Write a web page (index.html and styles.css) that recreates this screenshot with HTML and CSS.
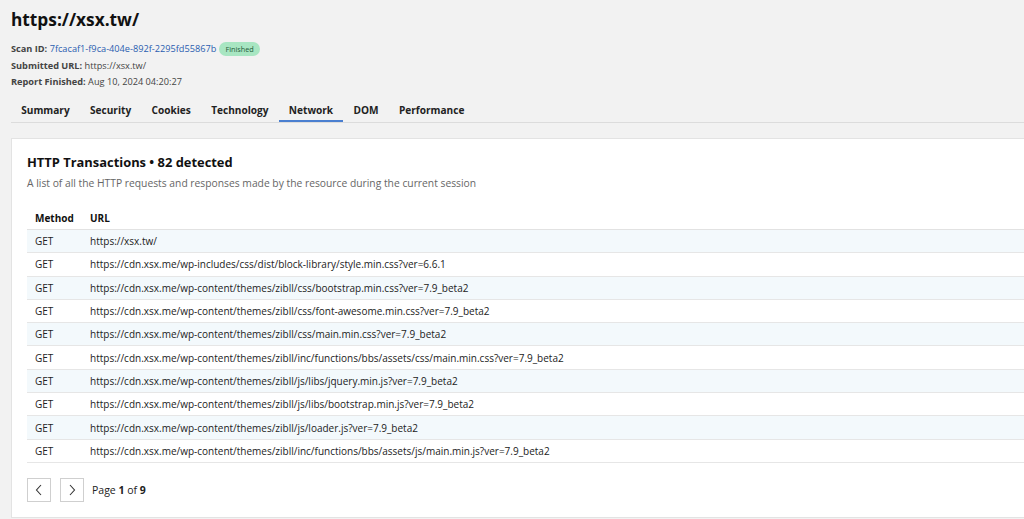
FILE: index.html
```html
<!DOCTYPE html>
<html>
<head>
<meta charset="utf-8">
<link rel="stylesheet" href="styles.css">
</head>
<body>
<header class="head">
  <h1 class="title">https://xsx.tw/</h1>
  <div class="meta">
    <div class="meta-line"><b>Scan ID:</b>&nbsp;<a class="link">7fcacaf1-f9ca-404e-892f-2295fd55867b</a><span class="badge">Finished</span></div>
    <div class="meta-line"><b>Submitted URL:</b>&nbsp;https://xsx.tw/</div>
    <div class="meta-line"><b>Report Finished:</b>&nbsp;Aug 10, 2024 04:20:27</div>
  </div>
</header>
<nav class="tabs">
  <span class="tab">Summary</span>
  <span class="tab">Security</span>
  <span class="tab">Cookies</span>
  <span class="tab">Technology</span>
  <span class="tab active">Network</span>
  <span class="tab">DOM</span>
  <span class="tab">Performance</span>
</nav>
<section class="card">
  <h2 class="card-title">HTTP Transactions • 82 detected</h2>
  <p class="card-desc">A list of all the HTTP requests and responses made by the resource during the current session</p>
  <table class="tx">
    <thead><tr><th class="c-method">Method</th><th>URL</th></tr></thead>
    <tbody>
      <tr><td>GET</td><td>https://xsx.tw/</td></tr>
      <tr><td>GET</td><td>https://cdn.xsx.me/wp-includes/css/dist/block-library/style.min.css?ver=6.6.1</td></tr>
      <tr><td>GET</td><td>https://cdn.xsx.me/wp-content/themes/zibll/css/bootstrap.min.css?ver=7.9_beta2</td></tr>
      <tr><td>GET</td><td>https://cdn.xsx.me/wp-content/themes/zibll/css/font-awesome.min.css?ver=7.9_beta2</td></tr>
      <tr><td>GET</td><td>https://cdn.xsx.me/wp-content/themes/zibll/css/main.min.css?ver=7.9_beta2</td></tr>
      <tr><td>GET</td><td>https://cdn.xsx.me/wp-content/themes/zibll/inc/functions/bbs/assets/css/main.min.css?ver=7.9_beta2</td></tr>
      <tr><td>GET</td><td>https://cdn.xsx.me/wp-content/themes/zibll/js/libs/jquery.min.js?ver=7.9_beta2</td></tr>
      <tr><td>GET</td><td>https://cdn.xsx.me/wp-content/themes/zibll/js/libs/bootstrap.min.js?ver=7.9_beta2</td></tr>
      <tr><td>GET</td><td>https://cdn.xsx.me/wp-content/themes/zibll/js/loader.js?ver=7.9_beta2</td></tr>
      <tr><td>GET</td><td>https://cdn.xsx.me/wp-content/themes/zibll/inc/functions/bbs/assets/js/main.min.js?ver=7.9_beta2</td></tr>
    </tbody>
  </table>
  <div class="pager">
    <button class="pg-btn" aria-label="Previous"><svg width="10" height="12" viewBox="0 0 10 12"><path d="M7 1 L2.5 6 L7 11" fill="none" stroke="#333" stroke-width="1.1"/></svg></button>
    <button class="pg-btn" aria-label="Next"><svg width="10" height="12" viewBox="0 0 10 12"><path d="M3 1 L7.5 6 L3 11" fill="none" stroke="#333" stroke-width="1.1"/></svg></button>
    <span class="pg-text">Page <b>1</b> of <b>9</b></span>
  </div>
</section>
</body>
</html>
```

FILE: styles.css
```css
* { box-sizing: border-box; }
html, body { margin: 0; padding: 0; }
body {
  background: #f2f2f2;
  font-family: "Open Sans", "Noto Sans", sans-serif;
  color: #222;
  width: 1024px;
  height: 519px;
  overflow: hidden;
  padding-left: 11px;
}
.head { padding-top: 8px; }
.title {
  margin: 0;
  font-size: 17.3px;
  font-weight: 700;
  line-height: 24px;
  color: #111;
}
.meta { margin-top: 9px; font-size: 9.2px; color: #444; }
.meta-line { line-height: 16.5px; height: 16.5px; display: flex; align-items: center; white-space: pre; }
.meta-line b { color: #444; font-weight: 700; }
.link { color: #2a5db0; }
.badge {
  margin-left: 3px;
  background: #a8e6c2;
  color: #1f5d3a;
  font-size: 7.3px;
  border-radius: 8px;
  padding: 0 6px;
  line-height: 14px;
  height: 14px;
}
.tabs {
  margin-top: 8px;
  display: flex;
  border-bottom: 1px solid #dcdcdc;
  width: 1013px;
  height: 24px;
}
.tab {
  padding: 0 10.2px;
  font-size: 10.1px;
  font-weight: 700;
  line-height: 22px;
  color: #222;
  border-bottom: 2px solid transparent;
}
.tab.active { border-bottom-color: #4a7fd0; }
.card {
  margin-top: 15px;
  background: #fff;
  border: 1px solid #e3e3e3;
  width: 1040px;
  height: 380px;
  padding: 14px 16px 0 15px;
}
.card-title { margin: 0; font-size: 12.9px; font-weight: 700; line-height: 18px; color: #111; }
.card-desc { margin: 4px 0 0; font-size: 10.3px; line-height: 16px; color: #666; }
.tx { margin-top: 17px; border-collapse: collapse; width: 1010px; font-size: 10px; }
.tx th { text-align: left; font-weight: 700; color: #111; height: 22px; padding: 0 8px; border-bottom: 1px solid #e2e2e2; }
.tx th.c-method { width: 55px; }
.tx td { height: 23.3px; padding: 0 8px; color: #222; border-bottom: 1px solid #e6e6e6; white-space: nowrap; }
.tx tbody tr:nth-child(odd) td { background: #f3f9fc; }
.pager { margin-top: 15px; display: flex; align-items: center; gap: 9px; }
.pg-btn {
  width: 24px; height: 24px;
  border: 1px solid #cfcfcf;
  background: #fff;
  padding: 0;
  display: flex; align-items: center; justify-content: center;
}
.pg-text { font-size: 10.5px; color: #222; margin-left: -1px; }
```
